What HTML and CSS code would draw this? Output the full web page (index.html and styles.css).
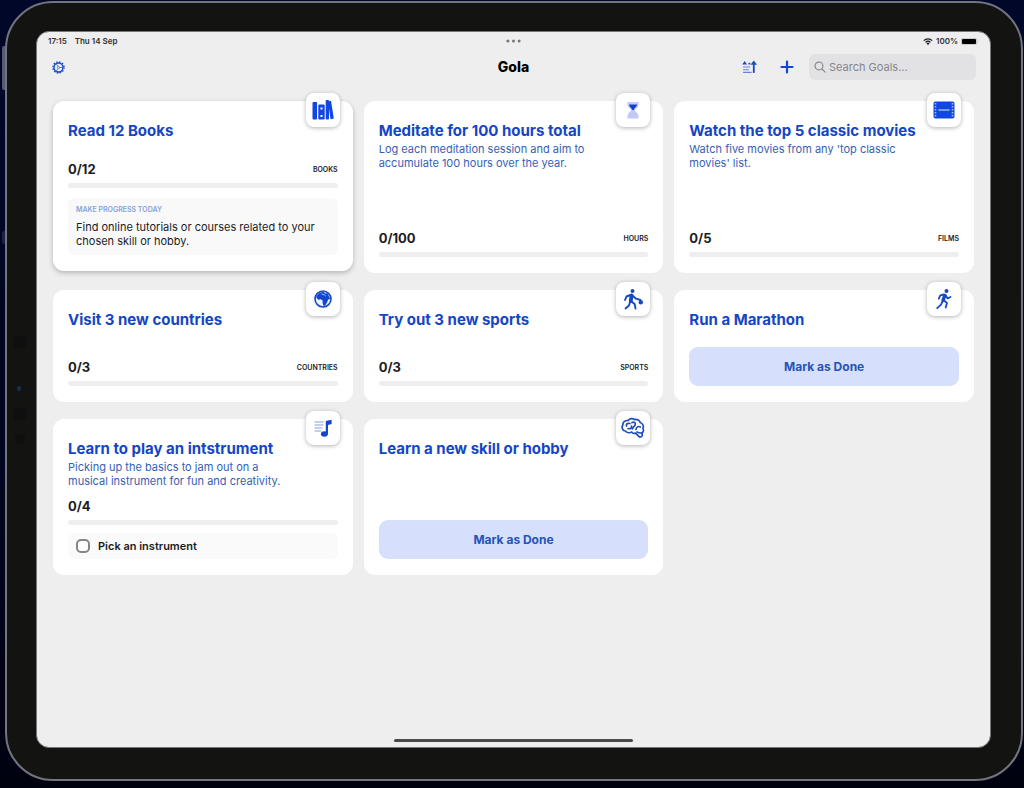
FILE: index.html
```html
<!DOCTYPE html>
<html lang="en">
<head>
<meta charset="utf-8">
<meta name="viewport" content="width=device-width, initial-scale=1">
<title>Gola</title>
<link rel="stylesheet" href="styles.css">
</head>
<body>
<div class="tablet">
  <span class="side-button power"></span>
  <span class="side-button volume"></span>
  <span class="sensor sensor-top"></span>
  <span class="sensor lens"></span>
  <span class="sensor sensor-mid"></span>
  <span class="sensor sensor-low"></span>
  <div class="screen">
    <div class="status">
      <div class="status-left"><span>17:15</span><span>Thu 14 Sep</span></div>
      <svg class="dots" viewBox="0 0 16 4"><circle cx="2" cy="2" r="1.6"/><circle cx="8" cy="2" r="1.6"/><circle cx="14" cy="2" r="1.6"/></svg>
      <div class="status-right">
        <svg class="wifi" viewBox="0 0 20 14" fill="none" stroke="#222" stroke-width="2.6"><path d="M1.5 5.2a12.2 12.2 0 0 1 17 0M5 8.8a7.2 7.2 0 0 1 10 0"/><path d="M10 13.8 6.8 10.9a4.6 4.6 0 0 1 6.4 0z" fill="#222" stroke="none"/></svg>
        <span>100%</span>
        <svg class="battery" viewBox="0 0 36 14"><rect x=".5" y=".5" width="31" height="13" rx="3.5" fill="none" stroke="#999"/><rect x="2" y="2" width="28" height="10" rx="2" fill="#000"/><path d="M33.5 4.500q2 2.500 0 5z" fill="#999"/></svg>
      </div>
    </div>
    <header class="nav">
      <button class="icon-button" type="button" aria-label="Settings">
        <svg class="gear" viewBox="0 0 28 28" fill="none" stroke="#1a4bc4"><circle cx="14" cy="14" r="12" stroke-width="3" stroke-dasharray="3.200 3.080"/><circle cx="14" cy="14" r="9.600" stroke-width="3"/><circle cx="14" cy="14" r="2.500" stroke-width="1.300"/><path d="M16.500 14h7M12.800 11.800 9.400 5.900M12.800 16.200l-3.400 5.900" stroke-width="1.400"/></svg>
      </button>
      <h1 class="app-title">Gola</h1>
      <div class="actions">
        <button class="icon-button" type="button" aria-label="Sort">
          <svg class="sort" viewBox="0 0 28 26"><g fill="none"><path d="M2 13h13M2 18h11M2 23h16" stroke-width="2" stroke="#6383dd"/><path d="M22 24V5" stroke-width="3.400" stroke="#1a4bc4"/></g><path d="M22 1l6 8H16z" fill="#1a4bc4"/><path d="M5 2l4.500 6.500H.5zM12 5h3.500v3.500H12z" fill="#1a4bc4"/></svg>
        </button>
        <button class="icon-button" type="button" aria-label="Add goal">
          <svg class="plus" viewBox="0 0 14 14"><path d="M7 1.500v11M1.500 7h11" stroke="#1246cd" stroke-width="2.200" stroke-linecap="round"/></svg>
        </button>
        <label class="search">
          <svg viewBox="0 0 14 14" fill="none" stroke="#7d7d82" stroke-width="1.200" stroke-linecap="round"><circle cx="5.800" cy="5.800" r="4.600"/><path d="M9.200 9.200 13 13"/></svg>
          <input type="search" placeholder="Search Goals..." aria-label="Search Goals">
        </label>
      </div>
    </header>
    <main class="goals">
      <article class="card raised">
        <div class="badge"><svg viewBox="0 0 24 24" fill="#1246e0"><rect x="1.500" y="4" width="4.600" height="17.500" rx="1"/><path fill-rule="evenodd" d="M8.300 6.500h4.400a1 1 0 0 1 1 1v13a1 1 0 0 1-1 1H8.300a1 1 0 0 1-1-1v-13a1 1 0 0 1 1-1zM9.500 9.500v2h2v-2zM9.500 17v2h2v-2z"/><rect x="14.700" y="2" width="3.300" height="19.500" rx="1"/><path d="M17 3.500l3-.7 2.800 17.700-3.300.8z"/></svg></div>
        <h2>Read 12 Books</h2>
        <div class="count"><strong>0/12</strong><span>BOOKS</span></div>
        <progress value="0" max="12" aria-label="Books read"></progress>
        <section class="tip"><h3>MAKE PROGRESS TODAY</h3><p>Find online tutorials or courses related to your chosen skill or hobby.</p></section>
      </article>
      <article class="card">
        <div class="badge"><svg viewBox="0 0 24 24"><path d="M6.500 4h11v3c0 3-3.600 3.300-3.600 5s3.600 3.300 3.600 6v2.500h-11V18c0-2.700 3.600-4.300 3.600-6S6.500 10 6.500 7z" fill="#c3c8f6"/><path d="M8 6.500h8c0 2.500-2.600 3.200-3.200 5.500h-1.600C10.600 9.700 8 9 8 6.500z" fill="#1742c8"/></svg></div>
        <h2>Meditate for 100 hours total</h2>
        <p class="description">Log each meditation session and aim to accumulate 100 hours over the year.</p>
        <div class="count"><strong>0/100</strong><span>HOURS</span></div>
        <progress value="0" max="100" aria-label="Hours meditated"></progress>
      </article>
      <article class="card">
        <div class="badge"><svg viewBox="0 0 24 24"><rect x="1.500" y="3.500" width="21" height="17" rx="2" fill="#1246e0"/><path d="M3.500 5v14M20.500 5v14" stroke="#a9bdf7" stroke-width="1.500" stroke-dasharray="1.600 1.400"/><path d="M6.500 12h11" stroke="#b7c7fb" stroke-width="1.300"/></svg></div>
        <h2>Watch the top 5 classic movies</h2>
        <p class="description">Watch five movies from any 'top classic movies' list.</p>
        <div class="count"><strong>0/5</strong><span>FILMS</span></div>
        <progress value="0" max="5" aria-label="Films watched"></progress>
      </article>
      <article class="card">
        <div class="badge"><svg viewBox="0 0 24 24"><circle cx="12" cy="12" r="8" fill="#edf2ff" stroke="#1549c9" stroke-width="1.600"/><path d="M5.500 9 8.500 5.800l4-1 1.500 1.400 2.700.4 1.500 3.300 1 2.200-2 .3-1.200 3-1.800 3.200-1.700.5-1-3.300.2-2.300-1.800-1.200-2.500.4-1.900-1.700z" fill="#1246cf"/><path d="M10.500 7.200l2.700.5 1.600 1.300" stroke="#cbd8fb" stroke-width=".8" fill="none"/></svg></div>
        <h2>Visit 3 new countries</h2>
        <div class="count"><strong>0/3</strong><span>COUNTRIES</span></div>
        <progress value="0" max="3" aria-label="Countries visited"></progress>
      </article>
      <article class="card">
        <div class="badge"><svg viewBox="0 0 24 24" fill="none" stroke="#1549c0" stroke-width="1.900" stroke-linecap="round" stroke-linejoin="round"><circle cx="11.500" cy="3.900" r="2" fill="#1549c0" stroke="none"/><path d="M10.500 8.500 9.800 14" stroke-width="3.800"/><path d="M9.500 8 5.500 9.500 4 13M11.500 8.500l3.500 3.200 4.500 1.300M9 15l-1 3.500-3.500 3M10.500 14.500l3.300 2.800.7 4.200"/><circle cx="19.800" cy="15.300" r="2.200" fill="#1549c0" stroke="none"/></svg></div>
        <h2>Try out 3 new sports</h2>
        <div class="count"><strong>0/3</strong><span>SPORTS</span></div>
        <progress value="0" max="3" aria-label="Sports tried"></progress>
      </article>
      <article class="card">
        <div class="badge"><svg viewBox="0 0 24 24" fill="none" stroke="#1549c0" stroke-width="1.800" stroke-linecap="round" stroke-linejoin="round"><circle cx="14.500" cy="4" r="2" fill="#1549c0" stroke="none"/><path d="M12.800 8.500 11 13.300" stroke-width="3.400"/><path d="M12 7.500 8.300 8.300l-1.500 3.400M13.800 8.500l1.900 3 2.800-1.500M10.500 14.500 9 17.700l-3.800 3.500M12 13.500l3 2.500-1.300 4.500"/></svg></div>
        <h2>Run a Marathon</h2>
        <button class="done" type="button">Mark as Done</button>
      </article>
      <article class="card">
        <div class="badge"><svg viewBox="0 0 24 24"><path d="M3.500 6h9M3.500 9h9M3.500 12h8M3.500 15h7" stroke="#86a0dc" stroke-width="1.200"/><path d="M14.800 18V5L20.600 3.800v4.300l-3.600 1V18" fill="#1246cf"/><ellipse cx="13.400" cy="18" rx="3.500" ry="2.700" fill="#1246cf"/></svg></div>
        <h2>Learn to play an intstrument</h2>
        <p class="description">Picking up the basics to jam out on a musical instrument for fun and creativity.</p>
        <div class="count"><strong>0/4</strong></div>
        <progress value="0" max="4" aria-label="Steps finished"></progress>
        <label class="task"><input type="checkbox"><span>Pick an instrument</span></label>
      </article>
      <article class="card">
        <div class="badge"><svg viewBox="0 0 24 24" fill="none" stroke="#1f4fbb" stroke-width="1.700" stroke-linecap="round" stroke-linejoin="round"><path d="M4.500 15C1.500 15 .3 11.500 1.800 9 1.700 6 4.500 4 7 4.600c1.500-2.400 4.800-2.600 6.600-1 2.700-.8 5 .6 5.600 2.900 2.800 1 3.800 3.700 2.700 5.900 1.100 1.800.4 3.700-.9 4.400l.3 2.900c-1 1.800-2.700 1.600-3.700.4l-3-3c-1.500.6-3 .3-3.800-1-2 1-4.900.7-6.300-1.100z"/><path d="M9 7.500C6.500 6.800 4.800 8 5.500 10M7 12.500c2.500.8 4-.5 3.500-2.500M11 6.500c2-1 3.800.3 3.200 2.300-.4 1.500-2.300 2-2.700 4M15 13.500c.3-2.500 2.300-3.700 4.300-2.500M16 16c1.500.8 3.200 1.300 5 .8"/></svg></div>
        <h2>Learn a new skill or hobby</h2>
        <button class="done" type="button">Mark as Done</button>
      </article>
    </main>
    <div class="home-indicator"></div>
  </div>
</div>
</body>
</html>
```
FILE: styles.css
```css
* { box-sizing: border-box; }
body {
  margin: 0;
  min-height: 100vh;
  display: flex;
  padding: 1px 1px 7px 5px;
  background: linear-gradient(#000729, #00061f 60%, #000210);
  color: #1c1c1e;
  font-family: Inter, "Liberation Sans", sans-serif;
}
h1, h2, h3, p { margin: 0; }
button, input { font: inherit; }
.tablet {
  position: relative;
  flex: 1;
  display: flex;
  padding: 28px 30px 31px 29px;
  background: #131312;
  border: 2px solid #73757e;
  border-radius: 48px;
}
.side-button {
  position: absolute;
  left: -5px;
  width: 3px;
  border-radius: 2px 0 0 2px;
  background: #555b70;
}
.power { top: 43px; height: 44px; }
.volume { top: 228px; height: 13px; background: #1c2140; }
.sensor {
  position: absolute;
  left: 6px;
  width: 13px;
  height: 12px;
  border-radius: 4px;
  background: #0f0f0f;
}
.sensor-top { top: 333px; }
.lens { top: 383px; left: 10px; width: 4px; height: 5px; background: #172f50; }
.sensor-mid { top: 405px; }
.sensor-low { top: 431px; width: 10px; left: 8px; height: 10px; }
.screen {
  flex: 1;
  min-width: 0;
  display: flex;
  flex-direction: column;
  background: #eee;
  border: 1px solid #777;
  border-radius: 13px;
}
.status {
  display: grid;
  grid-template-columns: 1fr auto 1fr;
  align-items: center;
  height: 18px;
  padding: 0 11px;
  font-size: 8px;
  font-weight: 600;
  color: #333;
}
.status-left { display: flex; gap: 8px; }
.status-right { display: flex; gap: 3px; justify-content: flex-end; align-items: center; }
.dots { width: 15px; height: 4px; fill: #777; }
.wifi { width: 10px; height: 7px; }
.battery { width: 18px; height: 7px; }
.nav {
  display: grid;
  grid-template-columns: 1fr auto 1fr;
  align-items: center;
  height: 34px;
  padding: 0 14px;
}
.app-title { font-size: 14px; line-height: 20px; font-weight: 800; color: #000; }
.icon-button {
  display: flex;
  align-items: center;
  justify-content: center;
  justify-self: start;
  width: 15px;
  height: 24px;
  padding: 0;
  border: 0;
  background: none;
}
.gear { width: 13px; height: 13px; }
.sort { width: 15px; height: 14px; }
.plus { width: 14px; height: 14px; }
.actions { display: flex; align-items: center; justify-content: flex-end; gap: 22px; }
.actions .icon-button { flex: none; }
.search {
  display: flex;
  align-items: center;
  gap: 3px;
  width: 167px;
  height: 26px;
  margin-left: -7px;
  padding: 0 5px;
  border-radius: 6px;
  background: #e2e2e4;
}
.search svg { flex: none; width: 12px; height: 12px; }
.search input {
  min-width: 0;
  flex: 1;
  padding: 0;
  border: 0;
  outline: 0;
  background: none;
  font-size: 11px;
}
.search input::placeholder { color: #85858a; opacity: 1; }
.goals {
  display: grid;
  grid-template-columns: repeat(3, 1fr);
  gap: 17px 11px;
  padding: 17px 16px;
}
.card {
  position: relative;
  display: flex;
  flex-direction: column;
  min-width: 0;
  min-height: 112px;
  padding: 20px 15px 16px;
  border-radius: 11px;
  background: #fff;
}
.raised { margin-bottom: 2px; box-shadow: 0 2px 5px rgba(0, 0, 0, .24); }
.badge {
  position: absolute;
  top: -8px;
  right: 13px;
  display: flex;
  align-items: center;
  justify-content: center;
  width: 34px;
  height: 34px;
  border-radius: 8px;
  background: #fff;
  box-shadow: 0 1px 4px rgba(0, 0, 0, .3);
}
.badge svg { width: 24px; height: 24px; }
.card h2 { font-size: 15px; line-height: 20px; font-weight: 700; color: #1446c4; }
.description {
  max-width: 224px;
  margin: 1px 0 9px;
  font-size: 11px;
  line-height: 14px;
  color: #3561b4;
}
.count {
  display: flex;
  align-items: center;
  justify-content: space-between;
  height: 18px;
  margin-top: auto;
}
.count strong { font-size: 13px; font-weight: 700; }
.count span { font-size: 7px; font-weight: 600; }
.raised .count { margin-top: 19px; }
progress {
  appearance: none;
  display: block;
  width: 100%;
  height: 5px;
  margin-top: 5px;
  border: 0;
  border-radius: 3px;
  overflow: hidden;
  background: #eee;
}
progress::-webkit-progress-bar { background: #eee; }
progress::-webkit-progress-value { background: #1446c4; }
.tip {
  margin-top: 10px;
  padding: 7px 8px;
  border-radius: 6px;
  background: #f9f9f9;
}
.tip h3 { font-size: 7px; line-height: 10px; font-weight: 600; color: #86a2da; }
.tip p { margin-top: 5px; font-size: 11px; line-height: 14px; }
.done {
  height: 39px;
  margin-top: auto;
  border: 0;
  border-radius: 9px;
  background: #d6e0fd;
  color: #2453b8;
  font-size: 12px;
  font-weight: 700;
}
.task {
  display: flex;
  align-items: center;
  gap: 8px;
  height: 26px;
  margin-top: 8px;
  padding: 0 8px;
  border-radius: 6px;
  background: #fafafa;
  font-size: 11px;
  font-weight: 600;
}
.task input {
  appearance: none;
  width: 14px;
  height: 14px;
  margin: 0;
  border: 2px solid #858585;
  border-radius: 5px;
  background: #fff;
}
.home-indicator {
  width: 25%;
  height: 3px;
  margin: auto auto 5px;
  border-radius: 2px;
  background: #4a4a4a;
}
```
